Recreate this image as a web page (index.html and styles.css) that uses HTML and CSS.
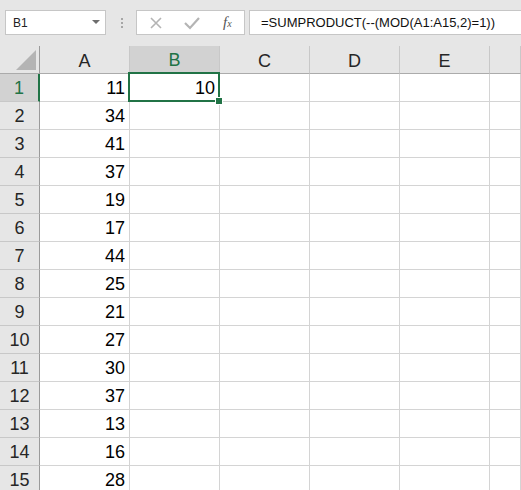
FILE: index.html
```html
<!DOCTYPE html>
<html lang="en">
<head>
  <meta charset="UTF-8" />
  <title>Book1 - Excel</title>
  <link rel="stylesheet" href="styles.css">
</head>
<body>
  <div class="toolbar">
    <div class="name-box">
      <span>B1</span>
      <span class="caret"></span>
    </div>
    <div class="grip"><i></i><i></i><i></i></div>
    <div class="fx-buttons">
      <svg class="icon" width="14" height="14" viewBox="0 0 14 14">
        <path d="M2 2 L12 12 M12 2 L2 12" stroke="#b4b4b4" stroke-width="1.6" fill="none" />
      </svg>
      <svg class="icon" width="16" height="14" viewBox="0 0 16 14">
        <path d="M1 7 L6 12 L15 2" stroke="#b4b4b4" stroke-width="2.2" fill="none" />
      </svg>
      <span class="fx">f<sub>x</sub></span>
    </div>
    <div class="formula">=SUMPRODUCT(--(MOD(A1:A15,2)=1))</div>
  </div>

  <div class="sheet" id="sheet">
    <div class="corner">
      <svg width="40" height="27" viewBox="0 0 40 27">
        <polygon points="16,24 36,24 36,4" fill="#b4b4b4" />
      </svg>
    </div>
    <div class="col-head">A</div>
    <div class="col-head active">B</div>
    <div class="col-head">C</div>
    <div class="col-head">D</div>
    <div class="col-head">E</div>
    <div class="col-head"></div>
    <div class="selection"><span class="handle"></span></div>
  </div>

  <script>
    const values = [11, 34, 41, 37, 19, 17, 44, 25, 21, 27, 30, 37, 13, 16, 28];
    const sheet = document.getElementById('sheet');
    const selection = sheet.querySelector('.selection');

    values.forEach((v, i) => {
      const row = i + 1;
      const cells = [
        `<div class="row-head${row === 1 ? ' active' : ''}">${row}</div>`,
        `<div class="cell">${v}</div>`,
        `<div class="cell">${row === 1 ? 10 : ''}</div>`,
        `<div class="cell"></div>`,
        `<div class="cell"></div>`,
        `<div class="cell"></div>`,
        `<div class="cell"></div>`
      ];
      selection.insertAdjacentHTML('beforebegin', cells.join(''));
    });
  </script>
</body>
</html>
```

FILE: styles.css
```css
body {
  margin: 0;
  background: #fff;
  font-family: 'Liberation Sans', Arial, sans-serif;
  color: #000;
  overflow: hidden;
  width: 521px;
  height: 490px;
}
.toolbar {
  display: flex;
  align-items: flex-start;
  height: 46px;
  box-sizing: border-box;
  padding: 10px 0 0 5px;
  background: #e6e6e6;
}
.name-box {
  width: 101px;
  height: 25px;
  box-sizing: border-box;
  border: 1px solid #c6c6c6;
  background: #fff;
  display: flex;
  align-items: center;
  justify-content: space-between;
  padding: 0 5px 0 7px;
  font-size: 12px;
  color: #222;
}
.caret {
  width: 0;
  height: 0;
  border-left: 4px solid transparent;
  border-right: 4px solid transparent;
  border-top: 4px solid #6d6d6d;
  margin-bottom: 1px;
}
.grip {
  display: flex;
  flex-direction: column;
  gap: 2px;
  margin: 8px 13px 0 15px;
}
.grip i {
  display: block;
  width: 2px;
  height: 2px;
  background: #a6a6a6;
}
.fx-buttons {
  width: 109px;
  height: 25px;
  box-sizing: border-box;
  border: 1px solid #c6c6c6;
  background: #fff;
  display: flex;
  align-items: center;
  padding: 0 0 0 12px;
  gap: 21px;
}
.fx {
  font-family: 'Liberation Serif', 'Times New Roman', serif;
  font-style: italic;
  font-size: 15px;
  color: #555;
  margin-left: 2px;
}
.fx sub {
  font-size: 10px;
  vertical-align: 0;
}
.formula {
  flex: 1;
  margin-left: 4px;
  height: 25px;
  box-sizing: border-box;
  border: 1px solid #c6c6c6;
  border-right: none;
  background: #fff;
  font-size: 13px;
  line-height: 23px;
  padding-left: 11px;
  color: #111;
  white-space: nowrap;
}
.sheet {
  position: relative;
  display: grid;
  grid-template-columns: 40px repeat(5, 90px) 1fr;
  grid-auto-rows: 28px;
  font-size: 18px;
}
.sheet > div {
  box-sizing: border-box;
}
.corner, .col-head {
  background: #e6e6e6;
  border-bottom: 1px solid #ababab;
}
.corner {
  border-right: 1px solid #9b9b9b;
}
.corner svg {
  display: block;
}
.col-head {
  border-right: 1px solid #c8c8c8;
  display: flex;
  align-items: center;
  justify-content: center;
  padding-top: 3px;
  color: #262626;
}
.col-head.active {
  background: #d2d2d2;
  color: #217346;
  border-bottom: 2px solid #217346;
}
.row-head {
  background: #e6e6e6;
  border-right: 1px solid #9b9b9b;
  border-bottom: 1px solid #c8c8c8;
  display: flex;
  align-items: center;
  justify-content: center;
  padding-top: 2px;
  color: #262626;
}
.row-head.active {
  background: #d2d2d2;
  color: #217346;
  border-right: 2px solid #217346;
}
.cell {
  border-right: 1px solid #d4d4d4;
  border-bottom: 1px solid #d4d4d4;
  display: flex;
  align-items: center;
  justify-content: flex-end;
  padding: 2px 4px 0 0;
}
.selection {
  position: absolute;
  left: 128px;
  top: 26px;
  width: 92px;
  height: 30px;
  box-sizing: border-box;
  border: 2px solid #217346;
}
.handle {
  position: absolute;
  right: -5px;
  bottom: -5px;
  width: 6px;
  height: 6px;
  background: #217346;
  border: 1px solid #fff;
}
```
